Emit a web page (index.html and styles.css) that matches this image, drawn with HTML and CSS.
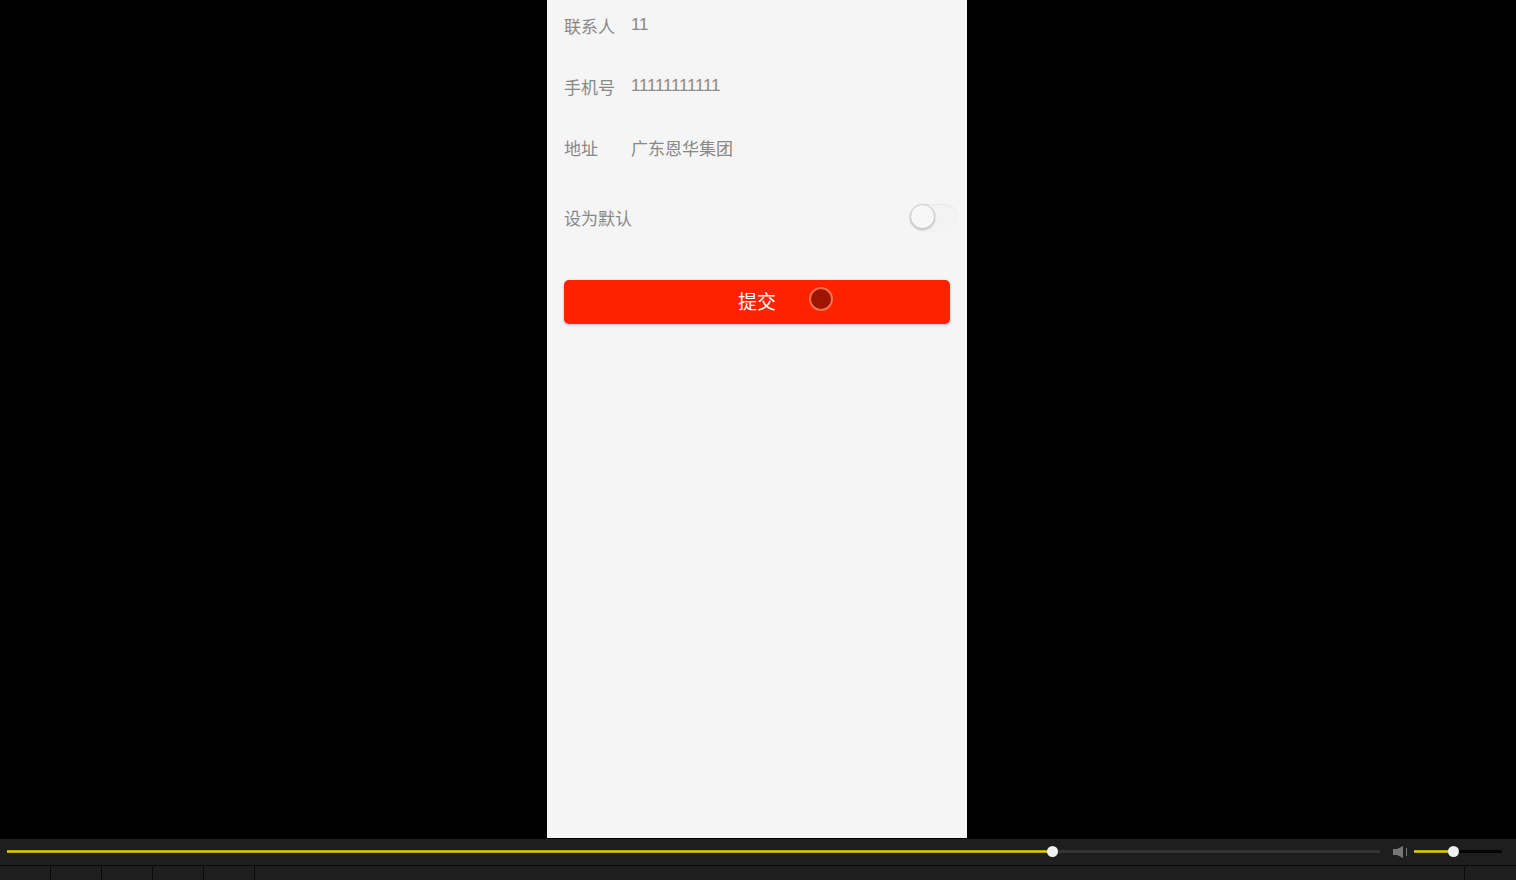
FILE: index.html
```html
<!DOCTYPE html>
<html lang="zh-CN">
<head>
  <meta charset="UTF-8" />
  <meta name="viewport" content="width=device-width, initial-scale=1.0"/>
  <title>地址</title>
  <link rel="stylesheet" href="styles.css">
</head>
<body>

  <div class="stage">
    <div class="phone">
      <!-- Address form -->
      <div class="row">
        <span class="label">联系人</span>
        <span class="value digits">11</span>
      </div>
      <div class="row">
        <span class="label">手机号</span>
        <span class="value digits">11111111111</span>
      </div>
      <div class="row">
        <span class="label">地址</span>
        <span class="value">广东恩华集团</span>
      </div>
      <div class="row row-switch">
        <span class="label">设为默认</span>
        <div class="switch"><div class="switch-knob"></div></div>
      </div>
      <div class="submit">
        提交
        <div class="click-dot"></div>
      </div>
    </div>
  </div>

  <!-- Player controls -->
  <div class="controls">
    <div class="seek-row">
      <div class="seek">
        <div class="seek-fill"></div>
        <div class="thumb"></div>
      </div>
      <svg class="mute-icon" width="15" height="12" viewBox="0 0 15 12">
        <path d="M0 3h4L10 0v12L4 9H0z" fill="#777"/>
        <path d="M13.5 2v8" stroke="#777" stroke-width="1" fill="none"/>
      </svg>
      <div class="volume">
        <div class="volume-fill"></div>
        <div class="thumb"></div>
      </div>
    </div>
    <div class="button-row">
      <div class="cell"></div>
      <div class="cell"></div>
      <div class="cell"></div>
      <div class="cell"></div>
      <div class="cell"></div>
      <div class="cell cell-wide"></div>
      <div class="cell cell-last"></div>
    </div>
  </div>

</body>
</html>
```

FILE: styles.css
```css
/* Global Styles */
* {
  box-sizing: border-box;
  margin: 0;
  padding: 0;
  font-family: "Liberation Sans", "Noto Sans CJK SC", sans-serif;
}

html, body {
  height: 100%;
  background: #000;
  overflow: hidden;
}

body {
  display: flex;
  flex-direction: column;
}

.stage {
  height: 838px;
  flex-shrink: 0;
  display: flex;
  justify-content: center;
  padding-right: 2px;
}

.phone {
  width: 420px;
  height: 100%;
  background: #f5f5f5;
  padding: 0 17px;
}

.row {
  height: 61px;
  display: flex;
  align-items: center;
  font-size: 17px;
  color: #888;
}

.row:first-child {
  height: 56px;
  padding-bottom: 6px;
}

.label {
  width: 67px;
  flex-shrink: 0;
  white-space: nowrap;
}

.value {
  color: #888;
}

.digits {
  font-kerning: none;
  letter-spacing: -1.45px;
  margin-top: -2px;
}

.row:first-child .digits {
  margin-top: 0;
}

.row-switch {
  margin-top: 9px;
  justify-content: space-between;
}

.switch {
  width: 48px;
  height: 28px;
  margin-right: -8px;
  border-radius: 14px;
  background: #f3f3f3;
  box-shadow: inset 0 1px 1px rgba(0, 0, 0, 0.05);
  position: relative;
}

.switch-knob {
  position: absolute;
  left: 0;
  top: 0;
  width: 25px;
  height: 25px;
  border-radius: 50%;
  background: #f7f7f7;
  border: 1px solid #ccc;
  box-shadow: 0 1px 2px rgba(0, 0, 0, 0.25);
}

.submit {
  position: relative;
  height: 44px;
  margin-top: 32px;
  width: 386px;
  background: #ff2200;
  border-radius: 5px;
  box-shadow: 0 1px 3px rgba(0, 0, 0, 0.25);
  color: #fff;
  font-size: 19px;
  line-height: 46px;
  text-align: center;
}

.click-dot {
  position: absolute;
  left: 245px;
  top: 7px;
  width: 24px;
  height: 24px;
  border-radius: 50%;
  background: #9e1600;
  border: 2px solid #f57050;
}

.controls {
  height: 41px;
  flex-shrink: 0;
  margin-top: 1px;
  background: #1e1e1e;
}

.seek-row {
  height: 27px;
  display: flex;
  align-items: center;
  padding: 0 0 1px 7px;
  border-bottom: 1px solid #0a0a0a;
}

.seek {
  position: relative;
  width: 1373px;
  height: 3px;
  background: #333;
}

.seek-fill {
  width: 1046px;
  height: 3px;
  background: linear-gradient(#a08f00, #e6cf00, #a08f00);
}

.thumb {
  position: absolute;
  left: 1040px;
  top: -4px;
  width: 11px;
  height: 11px;
  border-radius: 50%;
  background: #f0f0f0;
}

.mute-icon {
  margin-left: 13px;
}

.volume {
  position: relative;
  width: 88px;
  height: 3px;
  margin-left: 6px;
  background: #050505;
}

.volume-fill {
  width: 39px;
  height: 3px;
  background: linear-gradient(#a08f00, #e6cf00, #a08f00);
}

.volume .thumb {
  left: 34px;
}

.button-row {
  height: 14px;
  display: flex;
}

.cell {
  width: 51px;
  border-right: 1px solid #0a0a0a;
}

.cell-wide {
  width: 1210px;
}

.cell-last {
  flex: 1;
  border-right: none;
}
```
